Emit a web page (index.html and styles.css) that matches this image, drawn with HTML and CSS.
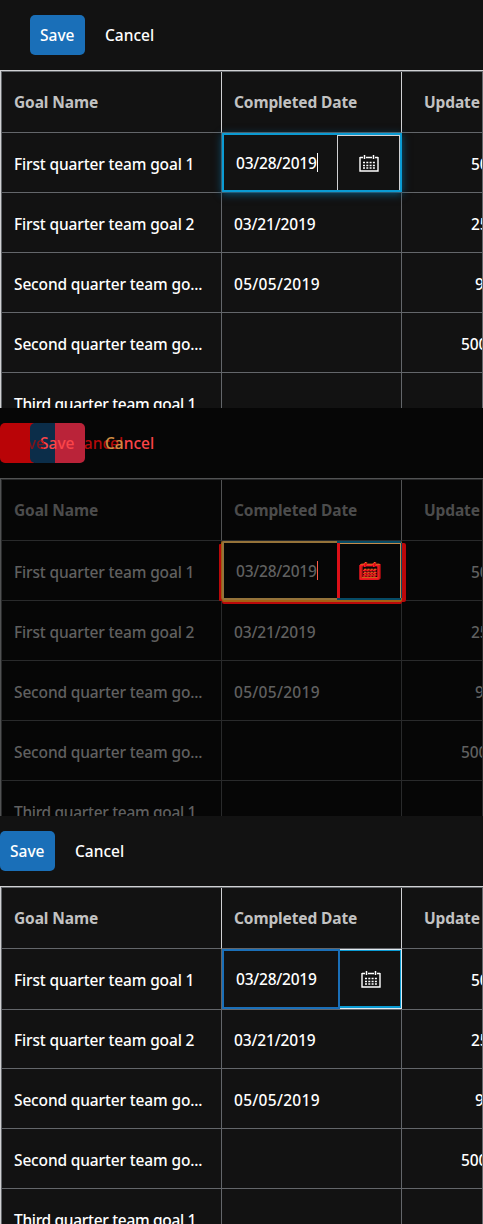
FILE: index.html
```html
<!DOCTYPE html>
<html lang="en">
<head>
<meta charset="utf-8">
<title>Team goals</title>
<link rel="stylesheet" href="styles.css">
</head>
<body>
<svg class="defs" width="0" height="0">
  <symbol id="calendar" viewBox="0 0 20 19">
    <path d="M1 3v14h18V3M1 3.5h3M7 3.5h6M16 3.5h3" fill="none" stroke="currentColor" stroke-width="1.4"/>
    <path d="M5.5 1v4M14.5 1v4" fill="none" stroke="currentColor" stroke-width="1.5"/>
    <path d="M4 8.5h12M4 11.5h12M4 14h12" fill="none" stroke="currentColor" stroke-width="1.4" stroke-dasharray="2 1.3"/>
  </symbol>
</svg>

<section class="panel panel-focus">
  <div class="toolbar"><button class="save">Save</button><button class="cancel">Cancel</button></div>
  <div class="grid">
    <div class="row head"><div class="cell">Goal Name</div><div class="cell">Completed Date</div><div class="cell update">Update</div></div>
    <div class="row"><div class="cell">First quarter team goal 1</div><div class="cell edit"><div class="editor"><div class="input"><span class="date">03/28/2019</span><i class="caret"></i></div><div class="picker"><svg class="icon"><use href="#calendar"/></svg></div></div></div><div class="cell n50">50</div></div>
    <div class="row"><div class="cell">First quarter team goal 2</div><div class="cell date">03/21/2019</div><div class="cell n50">25</div></div>
    <div class="row"><div class="cell">Second quarter team go...</div><div class="cell date wide">05/05/2019</div><div class="cell n9">9</div></div>
    <div class="row"><div class="cell">Second quarter team go...</div><div class="cell"></div><div class="cell n500">500</div></div>
    <div class="row"><div class="cell third">Third quarter team goal 1</div><div class="cell"></div><div class="cell"></div></div>
  </div>
</section>

<section class="panel panel-diff">
  <div class="toolbar"><div class="ghost"><span class="ghost-save">ve</span><span class="ghost-cancel">Cancel</span></div><button class="save">Save</button><button class="cancel"><span>Ca</span>ncel</button></div>
  <div class="grid">
    <div class="row head"><div class="cell">Goal Name</div><div class="cell">Completed Date</div><div class="cell update">Update</div></div>
    <div class="row"><div class="cell">First quarter team goal 1</div><div class="cell edit"><div class="editor"><div class="input"><span class="date">03/28/2019</span><i class="caret"></i></div><div class="picker"><svg class="icon icon-shift"><use href="#calendar"/></svg><svg class="icon"><use href="#calendar"/></svg></div></div></div><div class="cell n50">50</div></div>
    <div class="row"><div class="cell">First quarter team goal 2</div><div class="cell date">03/21/2019</div><div class="cell n50">25</div></div>
    <div class="row"><div class="cell">Second quarter team go...</div><div class="cell date wide">05/05/2019</div><div class="cell n9">9</div></div>
    <div class="row"><div class="cell">Second quarter team go...</div><div class="cell"></div><div class="cell n500">500</div></div>
    <div class="row"><div class="cell third">Third quarter team goal 1</div><div class="cell"></div><div class="cell"></div></div>
  </div>
</section>

<section class="panel panel-plain">
  <div class="toolbar"><button class="save">Save</button><button class="cancel">Cancel</button></div>
  <div class="grid">
    <div class="row head"><div class="cell">Goal Name</div><div class="cell">Completed Date</div><div class="cell update">Update</div></div>
    <div class="row"><div class="cell">First quarter team goal 1</div><div class="cell edit"><div class="editor"><div class="input"><span class="date">03/28/2019</span></div><div class="picker"><svg class="icon"><use href="#calendar"/></svg></div></div></div><div class="cell n50">50</div></div>
    <div class="row"><div class="cell">First quarter team goal 2</div><div class="cell date">03/21/2019</div><div class="cell n50">25</div></div>
    <div class="row"><div class="cell">Second quarter team go...</div><div class="cell date wide">05/05/2019</div><div class="cell n9">9</div></div>
    <div class="row"><div class="cell">Second quarter team go...</div><div class="cell"></div><div class="cell n500">500</div></div>
    <div class="row"><div class="cell third">Third quarter team goal 1</div><div class="cell"></div><div class="cell"></div></div>
  </div>
</section>
</body>
</html>
```
FILE: styles.css
```css
* { box-sizing: border-box; }
body { margin: 0; width: 483px; background: #121212; font: 500 15.5px/24px "Noto Sans", sans-serif; }
.defs { display: block; }
.panel {
  --bg: #121212; --text: #fff; --head: #c2c2c2; --line: #63666a; --light: #d0d1d3;
  height: 408px; overflow: hidden; background: var(--bg); color: var(--text);
}
.panel-diff { --bg: #060606; --text: #606060; --head: #4c4c4c; --line: #292a2b; --light: #515253; }
.toolbar { position: relative; display: flex; align-items: center; height: 70px; padding-left: 30px; gap: 10px; }
.panel-plain .toolbar { padding-left: 0; }
button { border: 0; margin: 0; padding: 0 0 0 10px; height: 40px; text-align: left; font: inherit; color: inherit; background: none; border-radius: 5px; white-space: nowrap; }
.save { width: 55px; background: #1a6fb8; letter-spacing: 0; }
.cancel { width: 70px; letter-spacing: 0; }
.grid { width: 483px; height: 400px; border: solid var(--light); border-width: 1px 0 0 1px; box-shadow: inset 1px 1px var(--line); padding: 1px 0 0 1px; }
.row { display: grid; grid-template-columns: 220px 180px 81px; height: 60px; }
.cell { min-width: 0; padding: 19px 0 0 12px; border: solid var(--line); border-width: 0 1px 1px 0; white-space: nowrap; overflow: hidden; letter-spacing: -.15px; }
.third { letter-spacing: -.32px; }
.head { height: 61px; color: var(--head); font-weight: 700; }
.head .cell { border-right-color: var(--light); padding-top: 18px; letter-spacing: -.12px; }
.head .cell.update { border-right-color: var(--line); padding-left: 22px; }
.date { letter-spacing: -.13px; }
.input .date { letter-spacing: -.22px; }
.date.wide { letter-spacing: .3px; }
.n50 { padding-left: 69px; }
.n9 { padding-left: 73px; }
.n500 { padding-left: 59px; }
.edit { padding: 0; overflow: visible; }
.editor { position: relative; z-index: 1; display: flex; width: 180px; height: 59px; }
.input { display: flex; align-items: center; width: 115px; padding-left: 12px; }
.caret { width: 1px; height: 19px; background: #fff; }
.picker { position: relative; display: flex; align-items: center; justify-content: center; width: 63px; padding: 1px 0 0 0; }
.icon { display: block; width: 20px; height: 19px; }
.panel-focus .editor, .panel-diff .editor { border: 2px solid #0b9bd3; }
.panel-focus .editor { box-shadow: 0 2px 8px #08557a; background: var(--bg); }
.panel-focus .input, .panel-diff .input { width: 113px; }
.panel-focus .picker { border: 1px solid #d0d1d3; border-bottom: 0; }
.panel-plain .editor { height: 60px; }
.panel-plain .input { width: 118px; border: 2px solid #1a6fb8; }
.panel-plain .picker { width: 62px; border: solid #e1eaf0; border-width: 1px 1px 1px 0; box-shadow: inset -1px 1px #0b9bd3, inset 0 -2px #0b9bd3; }
.panel-diff .toolbar { color: #fb4549; }
.panel-diff .save { position: relative; background: linear-gradient(90deg, #0b2d49 0 25px, #ba2339 25px); }
.panel-diff .cancel { position: relative; }
.cancel span { color: #cf8c42; }
.ghost { position: absolute; left: 0; top: 15px; width: 130px; height: 40px; padding-top: 8px; color: #b50a0a; background: linear-gradient(#b90407, #b90407) 0 0 / 34px 40px no-repeat; border-radius: 5px; }
.ghost-save { position: absolute; left: 28px; z-index: 1; opacity: .7; }
.ghost-cancel { position: absolute; left: 74px; }
.panel-diff .editor { border: 2px solid #95733a; border-right-width: 1px; box-shadow: -1px 0 #9e5d12, 0 2px #a36012, -4px 2px 0 -1px #ba080a, 4px 2px 0 #ba080a, 0 4px #ba080a; border-radius: 2px; background: var(--bg); }
.panel-diff .picker { width: 64px; padding-right: 3px; border-left: 3px solid #dc1018; border-right: 1px solid #c48a49; box-shadow: inset 0 1px #c48a49, 0 -2px #064b66, 0 2px #064b66, 1px 0 #064b66; color: #ff1824; }
.panel-diff .icon { filter: drop-shadow(1px 0 #c50b13); }
.panel-diff .icon-shift { position: absolute; left: 20px; top: 18px; color: #d8821f; }
.panel-diff .caret { background: #ff5a48; }
```
